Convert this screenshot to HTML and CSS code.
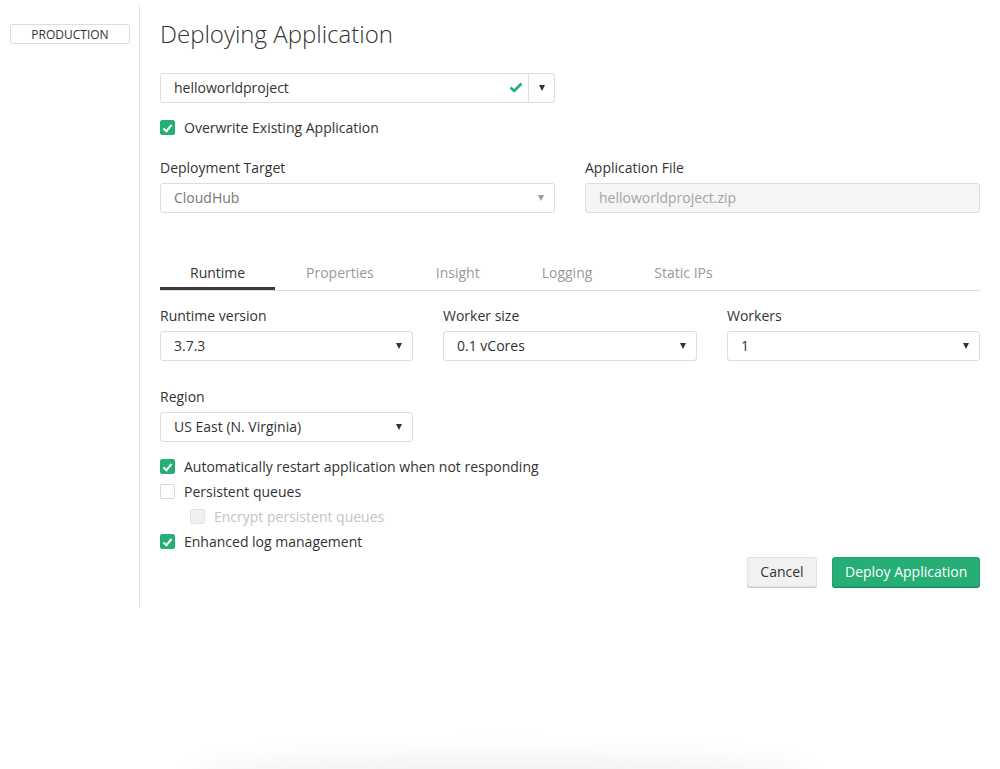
FILE: index.html
```html
<!DOCTYPE html>
<html>
<head>
<meta charset="utf-8">
<link rel="stylesheet" href="styles.css">
</head>
<body>
<div class="page">
  <aside class="sidebar">
    <div class="env-badge">PRODUCTION</div>
  </aside>
  <main class="main">
    <h1 class="title">Deploying Application</h1>

    <div class="app-select">
      <div class="app-select-value">
        <span>helloworldproject</span>
        <svg class="ok" width="14" height="11" viewBox="0 0 14 11"><path d="M1.5 5.5 L5.2 9 L12.5 1.5" fill="none" stroke="#26ae77" stroke-width="2.6"/></svg>
      </div>
      <div class="app-select-btn"><span class="caret dark"></span></div>
    </div>

    <label class="check-row">
      <span class="cb on"></span>Overwrite Existing Application
    </label>

    <div class="two-col">
      <div class="field">
        <div class="label">Deployment Target</div>
        <div class="select disabled"><span>CloudHub</span><span class="caret light"></span></div>
      </div>
      <div class="field">
        <div class="label">Application File</div>
        <div class="input readonly">helloworldproject.zip</div>
      </div>
    </div>

    <nav class="tabs">
      <div class="tab active">Runtime</div>
      <div class="tab">Properties</div>
      <div class="tab">Insight</div>
      <div class="tab">Logging</div>
      <div class="tab">Static IPs</div>
    </nav>

    <div class="three-col">
      <div class="field">
        <div class="label">Runtime version</div>
        <div class="select"><span>3.7.3</span><span class="caret dark"></span></div>
      </div>
      <div class="field">
        <div class="label">Worker size</div>
        <div class="select"><span>0.1 vCores</span><span class="caret dark"></span></div>
      </div>
      <div class="field">
        <div class="label">Workers</div>
        <div class="select"><span>1</span><span class="caret dark"></span></div>
      </div>
      <div class="field">
        <div class="label">Region</div>
        <div class="select"><span>US East (N. Virginia)</span><span class="caret dark"></span></div>
      </div>
    </div>

    <div class="options">
      <label class="check-row"><span class="cb on"></span>Automatically restart application when not responding</label>
      <label class="check-row"><span class="cb"></span>Persistent queues</label>
      <label class="check-row indent disabled"><span class="cb off"></span>Encrypt persistent queues</label>
      <label class="check-row"><span class="cb on"></span>Enhanced log management</label>
    </div>

    <div class="actions">
      <button class="btn btn-default">Cancel</button>
      <button class="btn btn-primary">Deploy Application</button>
    </div>
  </main>
</div>
<div class="bottom-shadow"></div>
</body>
</html>
```

FILE: styles.css
```css
html, body {
  margin: 0;
  padding: 0;
  background: #fff;
}
body {
  font-family: "Open Sans", "Liberation Sans", sans-serif;
  font-size: 14px;
  color: #333;
  width: 1000px;
  height: 769px;
  overflow: hidden;
  position: relative;
}
.page {
  display: flex;
  padding-top: 5px;
}
.sidebar {
  width: 140px;
  height: 602px;
  border-right: 1px solid #e2e2e2;
  box-sizing: border-box;
  padding: 19px 0 0 10px;
  flex-shrink: 0;
}
.env-badge {
  width: 120px;
  height: 20px;
  box-sizing: border-box;
  border: 1px solid #ddd;
  border-radius: 2px;
  font-size: 12px;
  line-height: 19px;
  text-align: center;
  color: #333;
}
.main {
  flex: 1;
  padding: 0 20px 0 20px;
  box-sizing: border-box;
}
.title {
  margin: 12px 0 0 0;
  font-size: 24px;
  font-weight: 300;
  line-height: 34px;
  color: #333;
}
.app-select {
  margin-top: 22px;
  width: 395px;
  height: 30px;
  display: flex;
  border: 1px solid #ddd;
  border-radius: 3px;
  box-sizing: border-box;
}
.app-select-value {
  flex: 1;
  display: flex;
  align-items: center;
  justify-content: space-between;
  padding: 0 5px 1px 13px;
  border-right: 1px solid #ddd;
}
.app-select-btn {
  width: 25px;
  display: flex;
  align-items: center;
  justify-content: center;
}
.caret {
  display: inline-block;
  width: 0;
  height: 0;
  border-left: 3.5px solid transparent;
  border-right: 3.5px solid transparent;
  border-top: 6px solid #333;
}
.caret.light { border-top-color: #999; }
.check-row {
  display: flex;
  align-items: center;
  height: 25px;
  line-height: 25px;
  color: #333;
}
.app-select + .check-row {
  margin-top: 12px;
}
.cb {
  width: 15px;
  height: 15px;
  box-sizing: border-box;
  border: 1px solid #d8d8d8;
  border-radius: 2px;
  margin-right: 9px;
  background: #fff;
  position: relative;
  flex-shrink: 0;
}
.cb.on {
  background: #26ae77;
  border-color: #26ae77;
}
.cb.on::after {
  content: "";
  position: absolute;
  left: 4px;
  top: 1.5px;
  width: 3px;
  height: 7px;
  border-right: 2px solid #fff;
  border-bottom: 2px solid #fff;
  transform: rotate(40deg);
}
.cb.off {
  background: #f0f0f0;
  border-color: #e2e2e2;
}
.check-row.disabled { color: #c4c4c4; }
.check-row.indent { padding-left: 30px; }

.two-col {
  display: grid;
  grid-template-columns: 395px 395px;
  column-gap: 30px;
  margin-top: 18px;
}
.label {
  line-height: 20px;
  height: 20px;
  margin-bottom: 5px;
  color: #333;
}
.select, .input {
  height: 30px;
  box-sizing: border-box;
  border: 1px solid #ddd;
  border-radius: 3px;
  display: flex;
  align-items: center;
  justify-content: space-between;
  padding: 0 10px 1px 13px;
}
.select.disabled { color: #777; }
.input.readonly {
  background: #f5f5f5;
  color: #a4a4a4;
}
.tabs {
  margin-top: 45px;
  display: flex;
  border-bottom: 1px solid #ddd;
  height: 32px;
}
.tab {
  padding: 0 31px;
  line-height: 30px;
  color: #999;
  box-sizing: border-box;
  height: 32px;
}
.tab.active {
  color: #333;
  border-bottom: 3px solid #3a3a3a;
  padding: 0 30px;
  width: 115px;
  text-align: center;
}
.three-col {
  display: grid;
  grid-template-columns: 253px 254px 253px;
  column-gap: 30px;
  row-gap: 26px;
  margin-top: 15px;
}
.options {
  margin-top: 12px;
}
.actions {
  display: flex;
  justify-content: flex-end;
  gap: 15px;
  margin-top: 3px;
}
.btn {
  font-family: "Open Sans", "Liberation Sans", sans-serif;
  font-size: 14px;
  height: 30px;
  border-radius: 3px;
  padding: 0 12px 1px;
  cursor: pointer;
  white-space: nowrap;
}
.btn-default {
  background: #f1f1f1;
  color: #333;
  border: 1px solid #e2e2e2;
  box-shadow: 0 1px 0 #c8c8c8;
  width: 70px;
}
.btn-primary {
  background: #26ae77;
  color: #fff;
  border: 1px solid #22a06d;
  box-shadow: 0 1px 0 #1b8a5c;
  width: 148px;
}
.bottom-shadow {
  position: absolute;
  left: 200px;
  width: 600px;
  top: 775px;
  height: 20px;
  border-radius: 50%;
  box-shadow: 0 -6px 30px 12px rgba(0,0,0,0.06);
}
```
